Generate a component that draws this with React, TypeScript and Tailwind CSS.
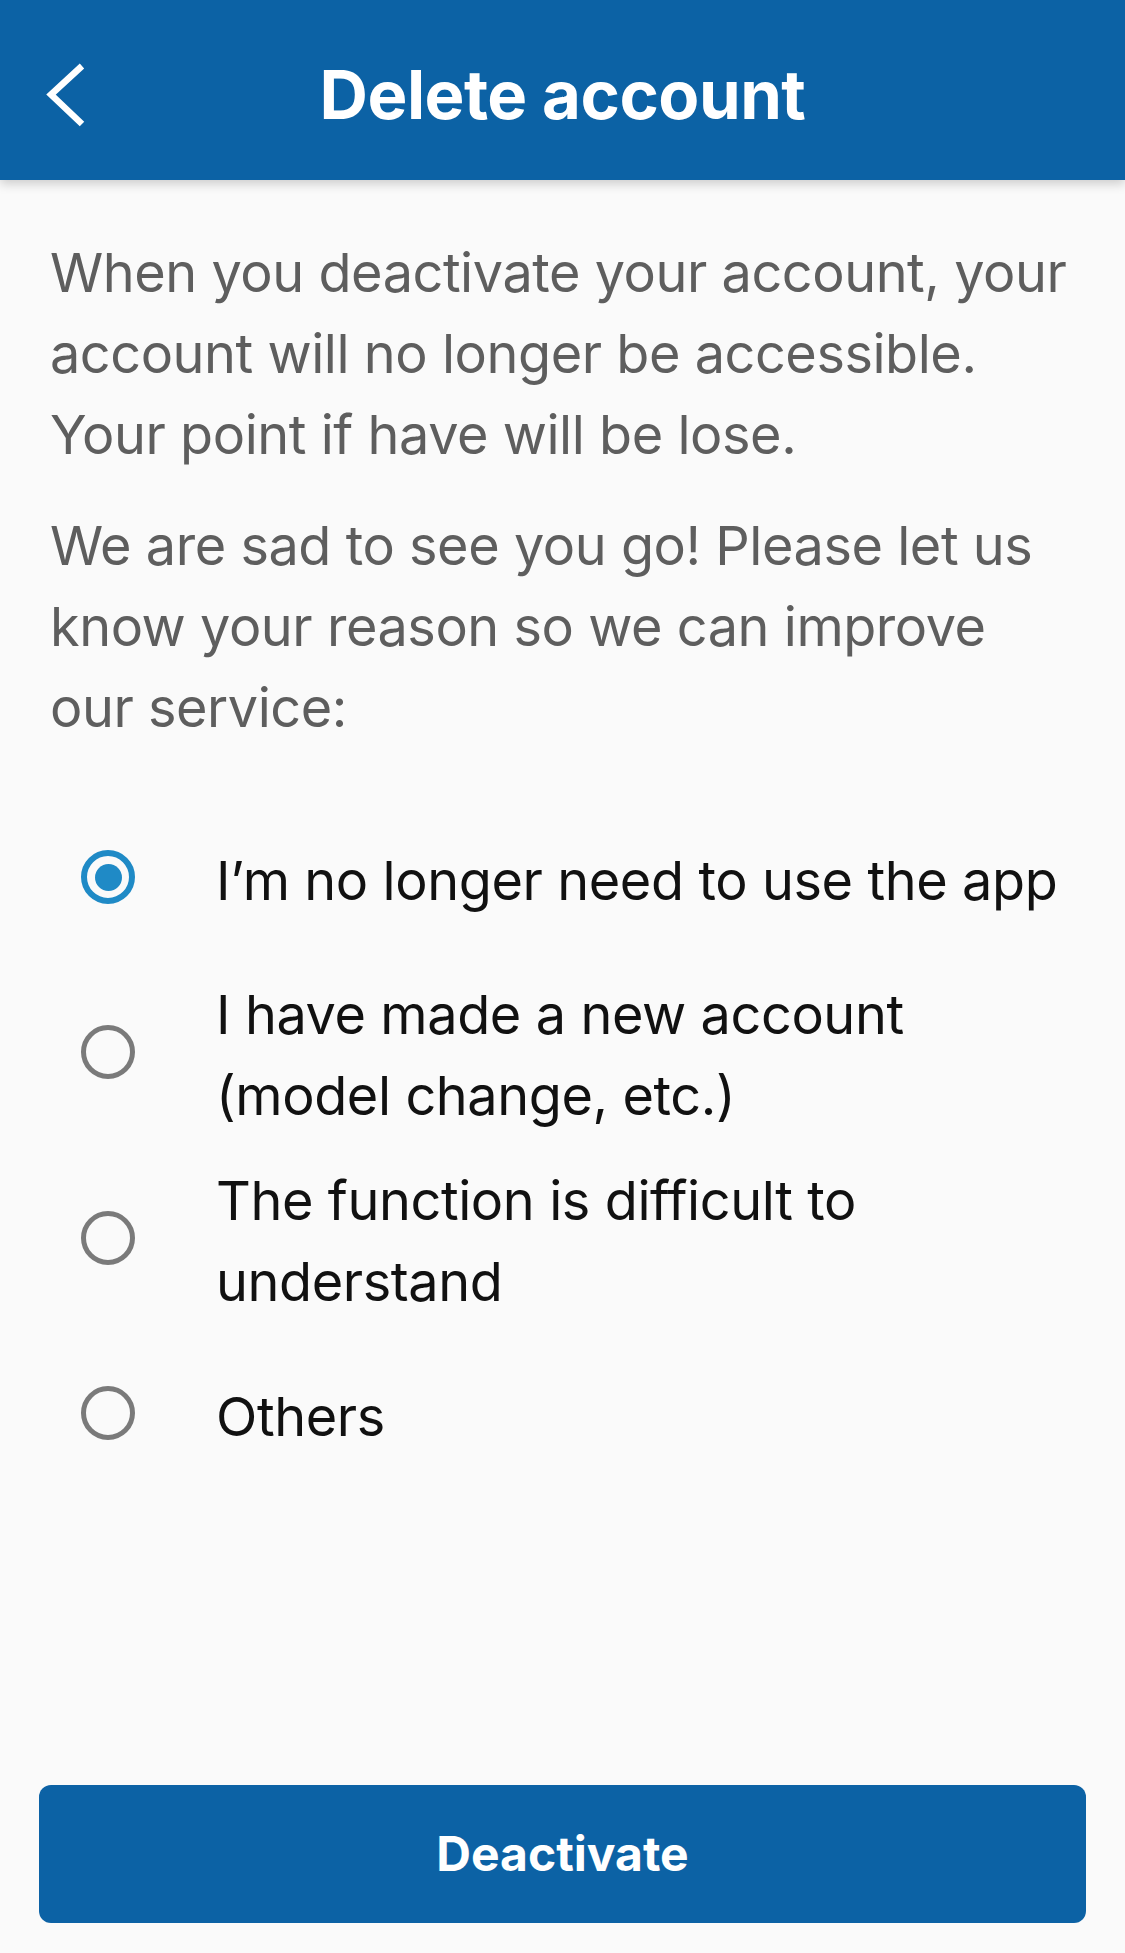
import React, { useState } from "react";

const options = [
  "I’m no longer need to use the app",
  "I have made a new account (model change, etc.)",
  "The function is difficult to understand",
  "Others",
];

function Radio({ checked }: { checked: boolean }) {
  return checked ? (
    <div className="mb-[6px] flex h-[54px] w-[54px] shrink-0 items-center justify-center rounded-full border-[6px] border-[#1f8ac6]">
      <div className="h-[27px] w-[27px] rounded-full bg-[#1f8ac6]" />
    </div>
  ) : (
    <div className="mb-[6px] h-[54px] w-[54px] shrink-0 rounded-full border-[5px] border-[#7a7a7a]" />
  );
}

export default function App() {
  const [selected, setSelected] = useState(0);
  return (
    <div
      className="flex min-h-[1953px] flex-col bg-[#fafafa]"
      style={{ fontFamily: "Inter, 'Noto Sans', sans-serif" }}
    >
      <header className="relative z-10 grid h-[180px] grid-cols-[1fr_auto_1fr] items-center bg-[#0c62a5] shadow-[0_4px_10px_rgba(0,0,0,0.18)]">
        <div className="flex items-center pl-[44px]">
          <svg width="44" height="66" viewBox="0 0 44 66" fill="none" className="mt-[12px]">
            <path
              d="M38 3 L7 31.5 L38 61"
              stroke="white"
              strokeWidth="6.5"
              strokeLinecap="butt"
              strokeLinejoin="miter"
            />
          </svg>
        </div>
        <h1 className="mt-[9px] text-[67px] font-bold leading-none tracking-[-0.5px] text-white">
          Delete account
        </h1>
        <div />
      </header>

      <main className="flex flex-1 flex-col">
        <div className="pl-[50px] pr-[47px] pt-[52px] text-[54px] leading-[81px] tracking-[-0.45px] text-[#5e5e5e]">
          <p>
            When you deactivate your account, your account will no longer be
            accessible. Your point if have will be lose.
          </p>
          <p className="mt-[30px]">
            We are sad to see you go! Please let us know your reason so we can
            improve our service:
          </p>
        </div>

        <ul className="mt-[50px] flex flex-col">
          {options.map((opt, i) => (
            <li
              key={opt}
              onClick={() => setSelected(i)}
              className="flex min-h-[164px] cursor-pointer items-center py-[12px] pl-[81px] pr-[36px]"
            >
              <Radio checked={selected === i} />
              <span className="ml-[81px] text-[54px] leading-[81px] tracking-[-0.4px] text-[#111111]">
                {opt}
              </span>
            </li>
          ))}
        </ul>

        <div className="mt-auto px-[39px] pb-[30px]">
          <button className="flex h-[138px] w-full items-center justify-center rounded-[12px] bg-[#0c62a5] text-[48px] font-bold text-white">
            Deactivate
          </button>
        </div>
      </main>
    </div>
  );
}
